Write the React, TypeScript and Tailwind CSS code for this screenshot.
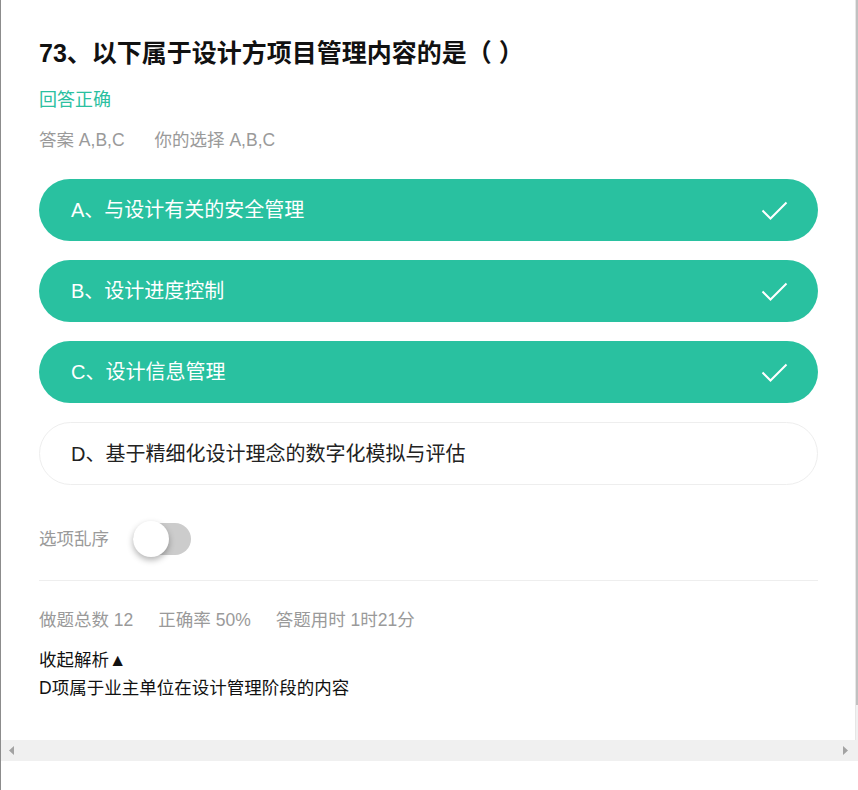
import React from "react";

const font = { fontFamily: '"Liberation Sans", Arial, "Noto Sans CJK SC", sans-serif' };

const options = [
  { key: "A", text: "与设计有关的安全管理", chosen: true },
  { key: "B", text: "设计进度控制", chosen: true },
  { key: "C", text: "设计信息管理", chosen: true },
  { key: "D", text: "基于精细化设计理念的数字化模拟与评估", chosen: false },
];

function CheckMark() {
  return (
    <svg width="27" height="19" viewBox="0 0 27 19" fill="none">
      <polyline points="1.5,9.5 9.5,17.5 25.5,1.5" stroke="white" strokeWidth="2" />
    </svg>
  );
}

function Option({ k, text, chosen }: { k: string; text: string; chosen: boolean }) {
  return (
    <div
      className={
        chosen
          ? "h-[62px] rounded-full bg-[#29c1a0] text-white flex items-center justify-between pl-[32px] pr-[30px]"
          : "h-[63px] rounded-full bg-white border border-[#eeeeee] text-[#222] flex items-center pl-[31px]"
      }
    >
      <span className="text-[20px]">
        {k}、{text}
      </span>
      {chosen && <CheckMark />}
    </div>
  );
}

export default function App() {
  return (
    <div className="w-[858px] h-[790px] flex bg-white overflow-hidden" style={font}>
      <div className="w-px bg-[#8c8c8c]" />
      <div className="flex-1 flex flex-col">
        <div className="h-[740px] flex">
          <main className="flex-1 pl-[38px] pr-[37px] pt-[38px]">
            <h1 className="text-[25px] leading-[30px] font-bold text-[#111]">
              73、以下属于设计方项目管理内容的是（ ）
            </h1>
            <div className="mt-[17px] text-[18px] leading-[30px] text-[#2bc0a0]">回答正确</div>
            <div className="mt-[10px] text-[17.5px] leading-[30px] text-[#9a9a9a] flex gap-[30px]">
              <span>答案 A,B,C</span>
              <span>你的选择 A,B,C</span>
            </div>

            <div className="mt-[24px] flex flex-col gap-[19px]">
              {options.map((o) => (
                <Option key={o.key} k={o.key} text={o.text} chosen={o.chosen} />
              ))}
            </div>

            <div className="mt-[38px] flex items-center gap-[24px]">
              <span className="text-[17.5px] text-[#9a9a9a]">选项乱序</span>
              <div className="relative w-[58px] h-[32px] rounded-full bg-[#cccccc]">
                <div className="absolute left-0 top-[-2px] w-[36px] h-[36px] rounded-full bg-white shadow-[0_3px_6px_rgba(0,0,0,0.3)]" />
              </div>
            </div>

            <div className="mt-[25px] h-px bg-[#eeeeee]" />

            <div className="mt-[27px] text-[17.5px] leading-[24px] text-[#9a9a9a] flex gap-[25px]">
              <span>做题总数 12</span>
              <span>正确率 50%</span>
              <span>答题用时 1时21分</span>
            </div>

            <div className="mt-[14px] text-[17.5px] leading-[28px] text-[#111]">
              <div>收起解析▲</div>
              <div>D项属于业主单位在设计管理阶段的内容</div>
            </div>
          </main>
          <div className="w-[3px] border-l border-[#e6e6e6] bg-[#f1f1f1] flex flex-col">
            <div className="h-[705px] bg-[#c1c1c1]" />
          </div>
        </div>
        <div className="h-[21px] bg-[#f0f0f0] flex items-center justify-between pl-[8px] pr-[10px]">
          <svg width="5" height="9" viewBox="0 0 5 9">
            <polygon points="5,0 0,4.5 5,9" fill="#a3a3a3" />
          </svg>
          <svg width="5" height="9" viewBox="0 0 5 9">
            <polygon points="0,0 5,4.5 0,9" fill="#a3a3a3" />
          </svg>
        </div>
      </div>
    </div>
  );
}
